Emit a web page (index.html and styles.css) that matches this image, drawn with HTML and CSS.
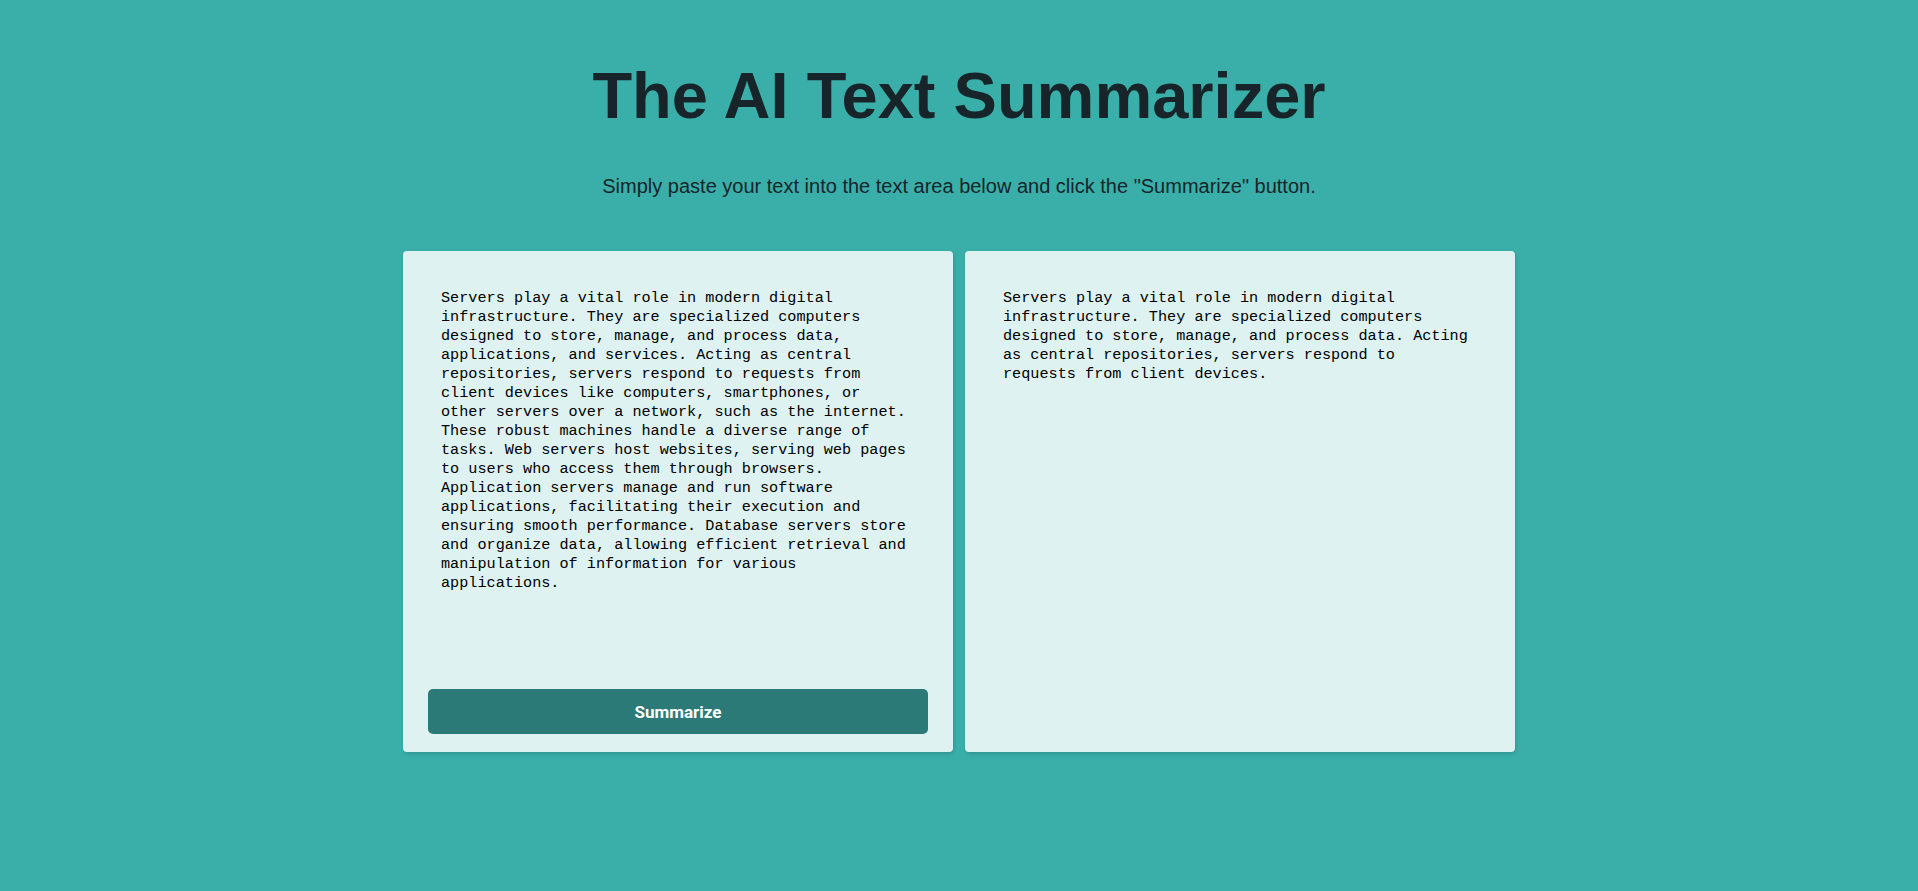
FILE: index.html
```html
<!DOCTYPE html>
<html lang="en">
<head>
<meta charset="utf-8">
<title>The AI Text Summarizer</title>
<link rel="stylesheet" href="styles.css">
</head>
<body>
<main class="page">
  <header class="header">
    <h1 class="title">The AI Text Summarizer</h1>
    <p class="subtitle">Simply paste your text into the text area below and click the "Summarize" button.</p>
  </header>
  <section class="panels">
    <div class="card card-input">
      <textarea class="input-text" spellcheck="false">Servers play a vital role in modern digital infrastructure. They are specialized computers designed to store, manage, and process data, applications, and services. Acting as central repositories, servers respond to requests from client devices like computers, smartphones, or other servers over a network, such as the internet. These robust machines handle a diverse range of tasks. Web servers host websites, serving web pages to users who access them through browsers. Application servers manage and run software applications, facilitating their execution and ensuring smooth performance. Database servers store and organize data, allowing efficient retrieval and manipulation of information for various applications.</textarea>
      <button class="summarize-btn" type="button">Summarize</button>
    </div>
    <div class="card card-output">
      <div class="output-text">Servers play a vital role in modern digital infrastructure. They are specialized computers designed to store, manage, and process data. Acting as central repositories, servers respond to requests from client devices.</div>
    </div>
  </section>
</main>
</body>
</html>
```
FILE: styles.css
```css
* {
  box-sizing: border-box;
}

html, body {
  margin: 0;
  padding: 0;
}

body {
  background: #3aafa9;
  color: #17252a;
  font-family: "Liberation Sans", Arial, sans-serif;
  min-height: 891px;
}

.page {
  display: flex;
  flex-direction: column;
  align-items: center;
  padding-top: 59px;
}

.header {
  display: flex;
  flex-direction: column;
  align-items: center;
}

.title {
  margin: 0;
  font-size: 65px;
  line-height: 74px;
  font-weight: 700;
  color: #17252a;
}

.subtitle {
  margin: 41px 0 0;
  font-size: 20px;
  line-height: 24px;
  color: #17252a;
}

.panels {
  margin-top: 53px;
  display: flex;
  gap: 12px;
  width: 1112px;
}

.card {
  flex: 1;
  height: 501px;
  background: #def2f1;
  border-radius: 4px;
  box-shadow: 1px 2px 4px rgba(0, 0, 0, 0.15);
  padding: 25px 25px 18px;
  display: flex;
  flex-direction: column;
}

.input-text {
  flex: 1;
  width: 100%;
  border: none;
  outline: none;
  resize: none;
  background: transparent;
  padding: 13px 17px 13px 13px;
  margin: 0 0 12px;
  font-family: "Liberation Mono", "DejaVu Sans Mono", monospace;
  font-size: 15.2px;
  line-height: 19px;
  color: #000;
  overflow: hidden;
}

.output-text {
  padding: 13px 17px 13px 13px;
  font-family: "Liberation Mono", "DejaVu Sans Mono", monospace;
  font-size: 15.2px;
  line-height: 19px;
  color: #000;
}

.summarize-btn {
  height: 45px;
  width: 100%;
  border: none;
  border-radius: 5px;
  background: #2b7a78;
  color: #feffff;
  font-family: Roboto, "Liberation Sans", sans-serif;
  font-weight: 700;
  font-size: 17px;
  cursor: pointer;
}
```
